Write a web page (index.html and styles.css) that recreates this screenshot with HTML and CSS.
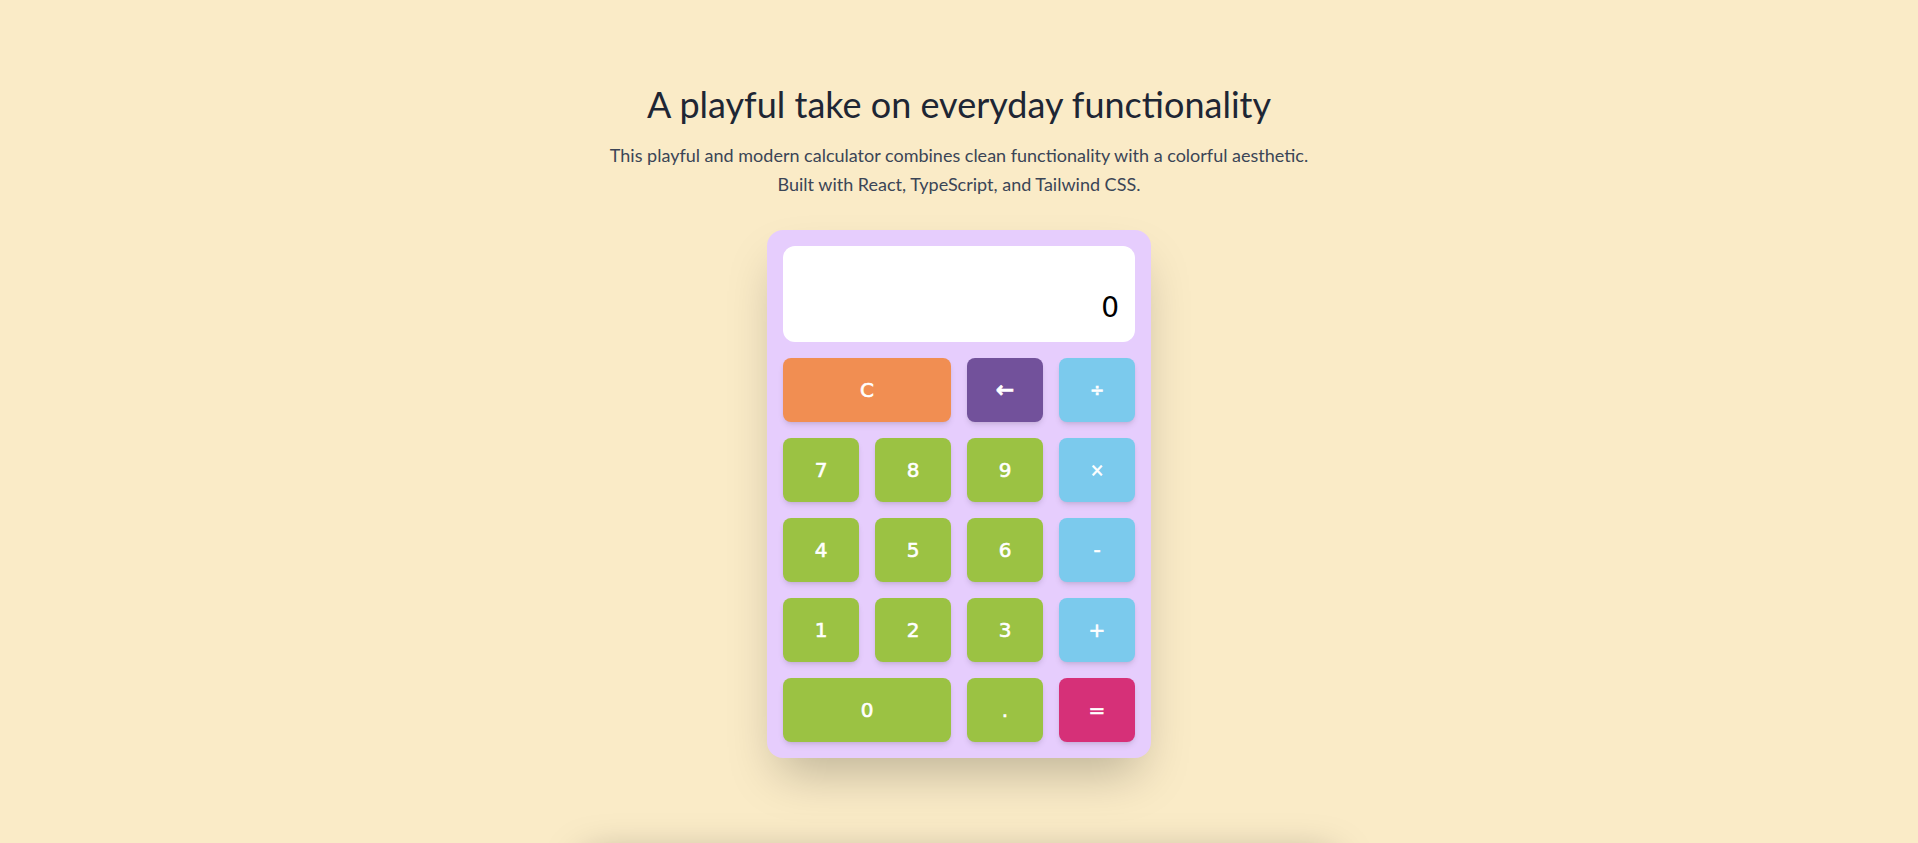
FILE: index.html
```html
<!DOCTYPE html>
<html lang="en">
<head>
<meta charset="utf-8">
<title>Playful Calculator</title>
<link rel="stylesheet" href="styles.css">
</head>
<body>
<main class="page">
  <header class="intro">
    <h1 class="title">A playful take on everyday functionality</h1>
    <p class="subtitle">This playful and modern calculator combines clean functionality with a colorful aesthetic.<br>Built with React, TypeScript, and Tailwind CSS.</p>
  </header>

  <div class="calculator">
    <div class="display"><span class="display-value">0</span></div>
    <div class="keys">
      <button class="key key-clear key-wide">C</button>
      <button class="key key-back">&#8592;</button>
      <button class="key key-op key-small">&#247;</button>

      <button class="key key-num">7</button>
      <button class="key key-num">8</button>
      <button class="key key-num">9</button>
      <button class="key key-op key-small">&#215;</button>

      <button class="key key-num">4</button>
      <button class="key key-num">5</button>
      <button class="key key-num">6</button>
      <button class="key key-op">-</button>

      <button class="key key-num">1</button>
      <button class="key key-num">2</button>
      <button class="key key-num">3</button>
      <button class="key key-op">+</button>

      <button class="key key-num key-wide">0</button>
      <button class="key key-num">.</button>
      <button class="key key-equals">=</button>
    </div>
  </div>

  <section class="below-card"></section>
</main>
</body>
</html>
```

FILE: styles.css
```css
html, body {
  margin: 0;
  padding: 0;
}

body {
  background: #faebc7;
  font-family: "Lato", "Noto Sans", sans-serif;
  color: #1f2937;
  overflow: hidden;
}

.page {
  display: flex;
  flex-direction: column;
  align-items: center;
  padding-top: 84px;
}

.intro {
  display: flex;
  flex-direction: column;
  align-items: center;
  text-align: center;
}

.title {
  margin: 0 0 17px 0;
  font-size: 36px;
  line-height: 40px;
  font-weight: 400;
  color: #1e2634;
}

.subtitle {
  margin: 0 0 30px 0;
  font-size: 18px;
  line-height: 29.25px;
  color: #3b4556;
}

.calculator {
  width: 352px;
  padding: 16px;
  background: #e6cdfd;
  border-radius: 16px;
  box-shadow: 0 25px 50px -12px rgba(0, 0, 0, 0.25);
  display: flex;
  flex-direction: column;
  gap: 16px;
}

.display {
  height: 96px;
  box-sizing: border-box;
  padding: 16px;
  background: #ffffff;
  border-radius: 12px;
  display: flex;
  align-items: flex-end;
  justify-content: flex-end;
}

.display-value {
  font-family: "DejaVu Sans", sans-serif;
  font-size: 28px;
  line-height: 36px;
  color: #000000;
}

.keys {
  display: grid;
  grid-template-columns: repeat(4, 76px);
  grid-auto-rows: 64px;
  gap: 16px;
}

.key {
  border: none;
  border-radius: 8px;
  font-family: "DejaVu Sans", sans-serif;
  font-size: 20px;
  font-weight: 400;
  -webkit-text-stroke: 0.6px #ffffff;
  color: #ffffff;
  padding: 0;
  box-shadow: 0 4px 6px -1px rgba(0, 0, 0, 0.1), 0 2px 4px -2px rgba(0, 0, 0, 0.1);
  cursor: pointer;
}

.key-wide {
  grid-column: span 2;
}

.key-num {
  background: #9bc243;
}

.key-clear {
  background: #f18e52;
}

.key-back {
  background: #72519b;
  font-size: 22px;
  font-weight: 700;
}

.key-op {
  background: #7bcaed;
}

.key-small {
  font-size: 17px;
}

.key-equals {
  background: #d63078;
}

.below-card {
  width: 768px;
  height: 300px;
  margin-top: 90px;
  background: #faebc7;
  border-radius: 16px;
  box-shadow: 0 0 40px -10px rgba(0, 0, 0, 0.35);
}
```
